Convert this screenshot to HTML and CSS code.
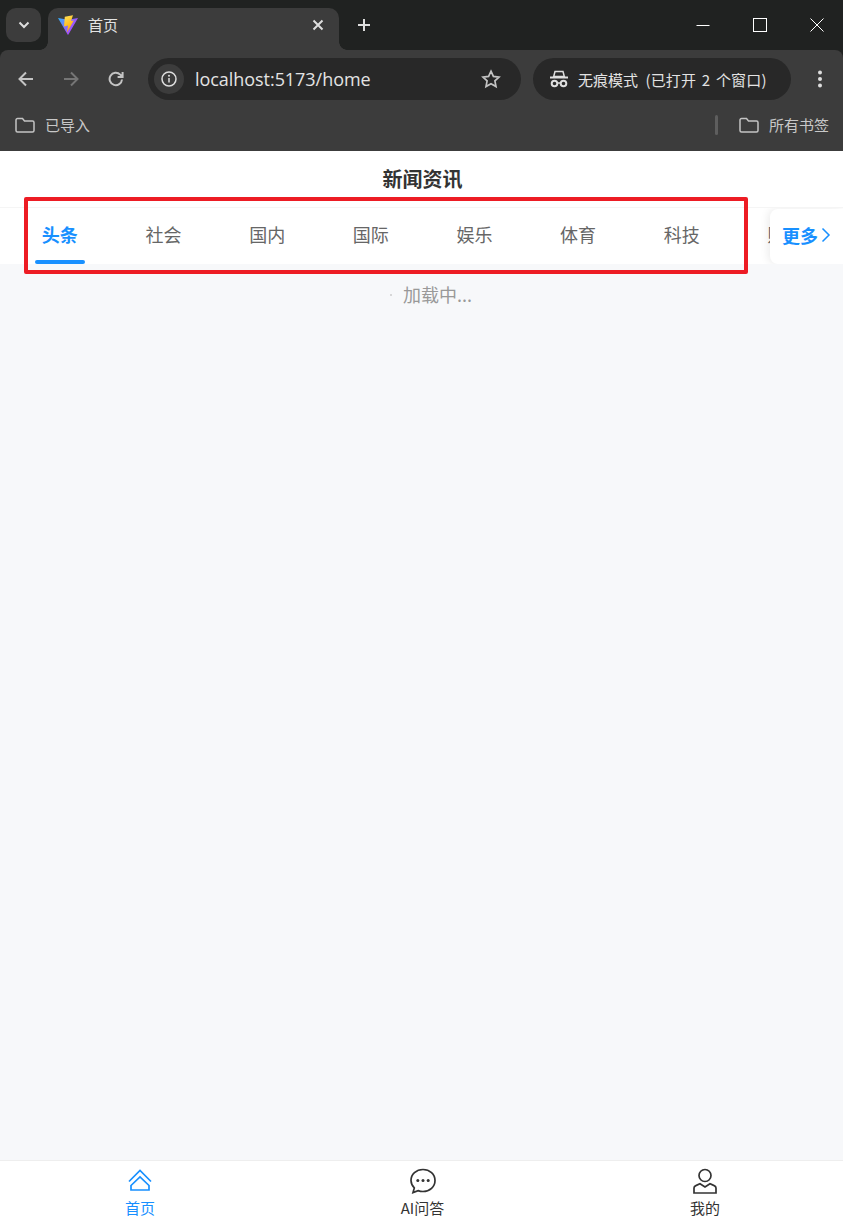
FILE: index.html
```html
<!DOCTYPE html>
<html lang="zh-CN">
<head>
<meta charset="utf-8">
<title>首页</title>
<link rel="stylesheet" href="styles.css">
</head>
<body>
<div class="window">
  <div class="tabstrip">
    <button class="tab-search"><svg width="12" height="8" viewBox="0 0 12 8"><path d="M1.500 1.500 6 6l4.500-4.500" class="s-light w2"/></svg></button>
    <div class="tab">
      <svg class="favicon" width="20" height="20" viewBox="0 0 20 20">
        <defs>
          <linearGradient id="vb" x1="0" y1="0" x2="1" y2="0.6"><stop offset="0" stop-color="#2fb4ff"/><stop offset="0.5" stop-color="#7f74f8"/><stop offset="1" stop-color="#bd34fe"/></linearGradient>
          <linearGradient id="vy" x1="0" y1="0" x2="0.4" y2="1"><stop offset="0" stop-color="#ffe45c"/><stop offset="1" stop-color="#ffa800"/></linearGradient>
        </defs>
        <path d="M0 3 10 4.800 20 3 10.400 19.600a.5.5 0 0 1-.8 0Z" fill="url(#vb)"/>
        <path d="M6.800 1.800 15 .2l-2 5.800 2.800-.6-6.800 12 1-7-4 1.100Z" fill="url(#vy)"/>
      </svg>
      <span class="tab-title">首页</span>
      <svg class="tab-close" width="12" height="12" viewBox="0 0 12 12"><path d="M1.500 1.500l9 9M10.500 1.500l-9 9" class="s-light w2"/></svg>
    </div>
    <svg class="new-tab" width="14" height="14" viewBox="0 0 14 14"><path d="M7 1v12M1 7h12" class="s-light w2"/></svg>
    <div class="win-controls">
      <svg width="14" height="14" viewBox="0 0 14 14"><path d="M0.500 7.500h13" class="s-white w1"/></svg>
      <svg width="14" height="14" viewBox="0 0 14 14"><rect x=".5" y=".5" width="13" height="13" class="s-white w1"/></svg>
      <svg width="14" height="14" viewBox="0 0 14 14"><path d="M.5.5l13 13M13.500.5l-13 13" class="s-white w1"/></svg>
    </div>
  </div>

  <div class="toolbar">
    <div class="nav-buttons">
      <svg width="16" height="16" viewBox="0 0 16 16"><path d="M15 8H2M8 1.500 1.500 8 8 14.500" class="s-mid w2"/></svg>
      <svg width="16" height="16" viewBox="0 0 16 16"><path d="M1 8h13M8 1.500 14.500 8 8 14.500" class="s-dim w2"/></svg>
      <svg width="16" height="16" viewBox="0 0 16 16"><path d="M14 8.500A6.200 6.200 0 1 1 12.200 3.600L14.400 5.600M14.600 1v5h-5" class="s-mid w2"/></svg>
    </div>
    <div class="omnibox">
      <span class="info"><svg width="16" height="16" viewBox="0 0 16 16"><circle cx="8" cy="8" r="7" class="s-light w15"/><path d="M8 7v4.500" class="s-light w15"/><circle cx="8" cy="4.800" r="1" class="f-light"/></svg></span>
      <span class="url">localhost:5173/home</span>
      <svg class="star" width="20" height="20" viewBox="0 0 20 20"><path d="M10 2.200l2.400 5.200 5.600.7-4.100 3.800 1.100 5.600L10 14.700l-5 2.800 1.100-5.600L2 8.100l5.600-.7Z" class="s-mid w17"/></svg>
    </div>
    <div class="incognito">
      <svg width="18" height="18" viewBox="0 0 18 18"><path d="M5 1.500h8l1.300 5H3.700Z" class="s-light w15"/><path d="M0 7.500h18" class="s-light w2"/><circle cx="4.500" cy="13.500" r="2.800" class="s-light w2"/><circle cx="13.500" cy="13.500" r="2.800" class="s-light w2"/><path d="M7.300 13h3.400" class="s-light w15"/></svg>
      <span class="incognito-text">无痕模式 <span class="incognito-count">(已打开 2 个窗口)</span></span>
    </div>
    <svg class="menu" width="6" height="18" viewBox="0 0 6 18"><circle cx="3" cy="2.500" r="2" class="f-light"/><circle cx="3" cy="9" r="2" class="f-light"/><circle cx="3" cy="15.500" r="2" class="f-light"/></svg>
  </div>

  <div class="bookmarks">
    <div class="bookmark">
      <svg width="20" height="16" viewBox="0 0 20 16"><path d="M1 3a1.500 1.500 0 0 1 1.500-1.500h5l2 2.500h8A1.500 1.500 0 0 1 19 5.500v8a1.500 1.500 0 0 1-1.500 1.500h-15A1.500 1.500 0 0 1 1 13.500Z" class="s-mid w15"/></svg>
      <span>已导入</span>
    </div>
    <div class="bookmarks-right">
      <span class="divider"></span>
      <div class="bookmark">
        <svg width="20" height="16" viewBox="0 0 20 16"><path d="M1 3a1.500 1.500 0 0 1 1.500-1.500h5l2 2.500h8A1.500 1.500 0 0 1 19 5.500v8a1.500 1.500 0 0 1-1.500 1.500h-15A1.500 1.500 0 0 1 1 13.500Z" class="s-mid w15"/></svg>
        <span>所有书签</span>
      </div>
    </div>
  </div>

  <div class="app">
    <header class="app-header">新闻资讯</header>
    <nav class="channels">
      <div class="channel-list">
        <span class="channel active">头条</span>
        <span class="channel">社会</span>
        <span class="channel">国内</span>
        <span class="channel">国际</span>
        <span class="channel">娱乐</span>
        <span class="channel">体育</span>
        <span class="channel">科技</span>
        <span class="channel">财经</span>
      </div>
      <div class="more">更多<svg width="10" height="16" viewBox="0 0 10 16"><path d="M1.500 1.500 8 8l-6.500 6.500" class="s-blue w15"/></svg></div>
    </nav>
    <main class="content">
      <div class="loading"><span class="spinner"></span><span>加载中...</span></div>
    </main>
    <footer class="tabbar">
      <div class="tabbar-item active">
        <svg width="26" height="26" viewBox="0 0 26 26"><path d="M2 13.500 13 2.500l11 11" class="s-blue w17"/><path d="M4 17.500 13 9l9 8.500V22H4Z" class="s-blue w17"/></svg>
        <span>首页</span>
      </div>
      <div class="tabbar-item">
        <svg width="26" height="26" viewBox="0 0 26 26"><path d="M13 1.500c6.800 0 12 4.800 12 11s-5.200 11-12 11c-1.700 0-3.400-.3-4.900-.9L3 24.500l1.300-4.600A10.800 10.800 0 0 1 1 12.500c0-6.200 5.200-11 12-11Z" class="s-dark w17"/><circle cx="7.800" cy="12.500" r="1.500" class="f-dark"/><circle cx="13" cy="12.500" r="1.500" class="f-dark"/><circle cx="18.200" cy="12.500" r="1.500" class="f-dark"/></svg>
        <span>AI问答</span>
      </div>
      <div class="tabbar-item">
        <svg width="26" height="26" viewBox="0 0 26 26"><circle cx="13" cy="7.500" r="6" class="s-dark w17"/><path d="M2 25v-5c0-1.200.7-2 1.800-2.400L8 15.800l5 3.200 5-3.200 4.200 1.800c1.100.4 1.800 1.200 1.800 2.400v5Z" class="s-dark w17"/></svg>
        <span>我的</span>
      </div>
    </footer>
  </div>
</div>
<div class="annotation"></div>
</body>
</html>
```
FILE: styles.css
```css
* { box-sizing: border-box; }
html, body { margin: 0; height: 100%; }
body {
  position: relative;
  overflow: hidden;
  font-family: "Noto Sans CJK SC", "Noto Sans", sans-serif;
  background: #202221;
}
svg { display: block; flex: none; fill: none; }
.w1 { stroke-width: 1; }
.w15 { stroke-width: 1.5; }
.w17 { stroke-width: 1.7; }
.w2 { stroke-width: 2; }
.s-white { stroke: #fff; }
.s-light { stroke: #dedede; }
.s-mid { stroke: #c4c4c4; }
.s-dim { stroke: #757575; }
.s-blue { stroke: #1890ff; }
.s-dark { stroke: #333; }
.f-light { fill: #dedede; }
.f-dark { fill: #333; }

.window { display: flex; flex-direction: column; height: 1221px; }

/* browser tab strip */
.tabstrip {
  height: 50px;
  flex: none;
  display: flex;
  align-items: flex-start;
  padding: 8px 0 0 6px;
  background: #202221;
}
.tab-search {
  width: 35px;
  height: 34px;
  padding: 0;
  border: 0;
  border-radius: 10px;
  background: #3c3c3c;
  display: flex;
  align-items: center;
  justify-content: center;
}
.tab {
  position: relative;
  width: 291px;
  height: 42px;
  margin-left: 7px;
  padding: 0 15px 8px 10px;
  display: flex;
  align-items: center;
  background: #3c3c3c;
  border-radius: 10px 10px 0 0;
  color: #e3e3e3;
}
.tab::before, .tab::after {
  content: "";
  position: absolute;
  bottom: 0;
  width: 8px;
  height: 8px;
  background: radial-gradient(circle at 0 0, transparent 7.500px, #3c3c3c 8px);
}
.tab::before { left: -8px; }
.tab::after { right: -8px; transform: scaleX(-1); }
.favicon { margin-right: 10px; }
.tab-title { font-size: 15px; line-height: 20px; flex: 1; }
.new-tab { margin: 10px 0 0 18px; }
.win-controls {
  margin-left: auto;
  margin-top: 10px;
  margin-right: 19px;
  display: flex;
  gap: 43px;
}

/* toolbar */
.toolbar {
  height: 54px;
  flex: none;
  display: flex;
  align-items: center;
  background: #3c3c3c;
  border-radius: 8px 8px 0 0;
  padding: 4px 0 0 18px;
}
.nav-buttons { display: flex; gap: 29px; }
.omnibox {
  width: 373px;
  height: 42px;
  margin-left: 24px;
  padding: 0 20px 0 6px;
  display: flex;
  align-items: center;
  border-radius: 21px;
  background: #282828;
}
.info {
  width: 30px;
  height: 30px;
  border-radius: 50%;
  background: #3c3c3c;
  display: flex;
  align-items: center;
  justify-content: center;
}
.url {
  flex: 1;
  margin-left: 11px;
  font-family: "Open Sans", sans-serif;
  font-size: 18px;
  letter-spacing: -0.05px;
  color: #e3e3e3;
}
.incognito {
  width: 258px;
  height: 42px;
  margin-left: 12px;
  padding-left: 17px;
  display: flex;
  align-items: center;
  gap: 10px;
  border-radius: 21px;
  background: #282828;
  color: #e3e3e3;
  font-size: 15px;
}
.incognito-text { white-space: pre; }
.incognito-count { margin-left: 4px; word-spacing: 2px; letter-spacing: 0.2px; }
.menu { margin-left: 26px; }

/* bookmarks bar */
.bookmarks {
  height: 47px;
  flex: none;
  display: flex;
  align-items: center;
  justify-content: space-between;
  padding: 0 14px 5px 15px;
  background: #3c3c3c;
  color: #c8c8c8;
  font-size: 15px;
}
.bookmark { display: flex; align-items: center; gap: 10px; }
.bookmark span { margin-bottom: 2px; }
.bookmarks-right { display: flex; align-items: center; gap: 21px; }
.divider { width: 3px; height: 20px; border-radius: 2px; background: #5e5e5e; }

/* app */
.app { flex: 1; display: flex; flex-direction: column; min-height: 0; background: #f7f8fa; }
.app-header {
  height: 57px;
  flex: none;
  display: flex;
  align-items: center;
  justify-content: center;
  padding: 0 0 1px 2px;
  background: #fff;
  border-bottom: 1px solid #f5f5f5;
  font-size: 20px;
  font-weight: 700;
  color: #333;
}
.channels {
  position: relative;
  height: 56px;
  flex: none;
  background: #fff;
  overflow: hidden;
}
.channel-list { display: flex; height: 100%; padding-left: 8px; }
.channel {
  position: relative;
  width: 103.670px;
  flex: none;
  display: flex;
  align-items: center;
  justify-content: center;
  padding-bottom: 4px;
  font-size: 18px;
  color: #666;
}
.channel.active { color: #1890ff; font-weight: 700; }
.channel.active::after {
  content: "";
  position: absolute;
  left: 27px;
  bottom: 0;
  width: 50px;
  height: 4px;
  border-radius: 2px;
  background: #1890ff;
}
.more {
  position: absolute;
  top: 1px;
  right: 0;
  bottom: 0;
  width: 73px;
  padding: 0 0 4px 12px;
  display: flex;
  align-items: center;
  gap: 3px;
  background: #fff;
  border-radius: 8px 0 0 8px;
  box-shadow: -2px 0 8px rgba(0, 0, 0, 0.08);
  color: #1890ff;
  font-size: 18px;
  font-weight: 700;
}
.content { flex: 1; min-height: 0; }
.loading {
  height: 62px;
  display: flex;
  justify-content: center;
  align-items: flex-start;
  gap: 11px;
  padding: 18px 0 0 19px;
  color: #999;
  font-size: 18px;
  line-height: 25px;
}
.spinner {
  width: 2px;
  height: 2px;
  margin-top: 12px;
  border-radius: 50%;
  background: #ccc;
}
.tabbar {
  height: 61px;
  flex: none;
  display: grid;
  grid-template-columns: repeat(3, 1fr);
  column-gap: 12.500px;
  padding: 0 3px 0 5px;
  background: #fff;
  border-top: 1px solid #eee;
}
.tabbar-item {
  display: flex;
  flex-direction: column;
  align-items: center;
  padding-top: 7px;
  color: #333;
  font-size: 15px;
  line-height: 20px;
}
.tabbar-item span { margin-top: 4px; }
.tabbar-item.active { color: #1890ff; }

/* red annotation frame drawn over the screenshot */
.annotation {
  position: absolute;
  left: 24px;
  top: 197px;
  width: 724px;
  height: 77px;
  border: 4.500px solid #ed1c24;
  border-radius: 2px;
}
```
